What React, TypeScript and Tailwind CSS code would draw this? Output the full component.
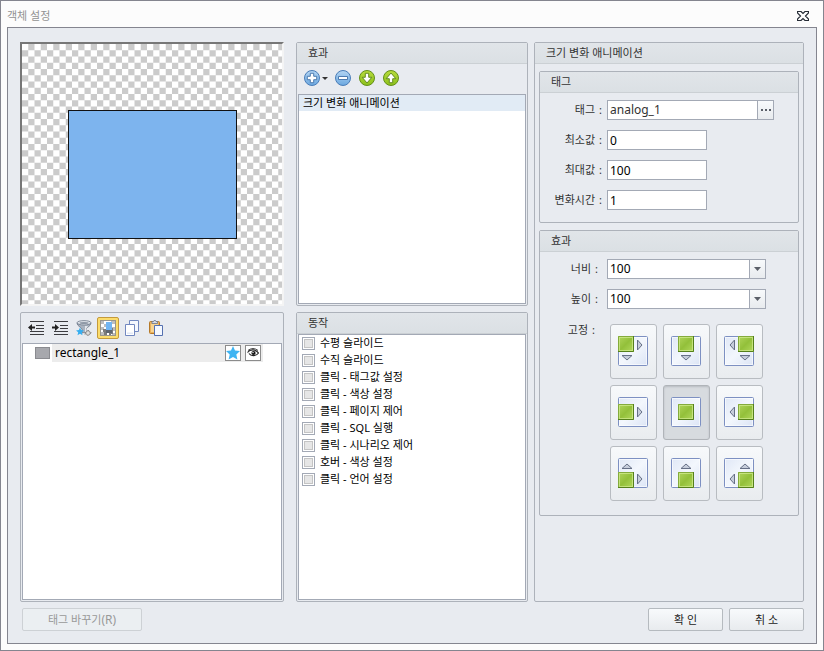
import { useState } from "react";
import type { ReactNode } from "react";

const ACTIONS = [
  "수평 슬라이드",
  "수직 슬라이드",
  "클릭 - 태그값 설정",
  "클릭 - 색상 설정",
  "클릭 - 페이지 제어",
  "클릭 - SQL 실행",
  "클릭 - 시나리오 제어",
  "호버 - 색상 설정",
  "클릭 - 언어 설정",
];

const ANCHORS = [
  { id: "tl", label: "왼쪽 위" },
  { id: "tc", label: "위" },
  { id: "tr", label: "오른쪽 위" },
  { id: "ml", label: "왼쪽" },
  { id: "mc", label: "가운데" },
  { id: "mr", label: "오른쪽" },
  { id: "bl", label: "왼쪽 아래" },
  { id: "bc", label: "아래" },
  { id: "br", label: "오른쪽 아래" },
];

function AnchorIcon({ id }: { id: string }) {
  const row = id[0];
  const col = id[1];
  const x = col === "l" ? 0 : col === "c" ? 7 : 14;
  const y = row === "t" ? 0 : row === "m" ? 7 : 14;
  const cx = col === "l" ? 9 : col === "c" ? 15 : 21;
  const cy = row === "t" ? 9 : row === "m" ? 15 : 21;
  return (
    <svg width="30" height="30" viewBox="0 0 30 30" aria-hidden="true">
      <defs>
        <linearGradient id={`frame-${id}`} x1="0" y1="0" x2="1" y2="1">
          <stop offset="0" stopColor="#dfe7f6" />
          <stop offset=".5" stopColor="#f3f7fd" />
          <stop offset="1" stopColor="#dbe4f5" />
        </linearGradient>
        <linearGradient id={`green-${id}`} x1="0" y1="0" x2="1" y2="1">
          <stop offset="0" stopColor="#b2d65e" />
          <stop offset=".5" stopColor="#93c03a" />
          <stop offset="1" stopColor="#b4da60" />
        </linearGradient>
      </defs>
      <rect x=".5" y=".5" width="29" height="29" rx="1" fill={`url(#frame-${id})`} stroke="#7d90c2" />
      <rect x="1.5" y="1.5" width="27" height="27" fill="none" stroke="#fff" strokeOpacity=".6" />
      <rect x={x} y={y} width="16" height="16" fill={`url(#green-${id})`} />
      <path d={`M${x + 0.5} ${y + 16}V${y + 0.5}H${x + 16}`} fill="none" stroke="#84ab3c" />
      <path d={`M${x + 15.5} ${y}V${y + 15.5}H${x}`} fill="none" stroke="#55801c" />
      <rect x={x + 1.5} y={y + 1.5} width="13" height="13" fill="none" stroke="#d3ec93" strokeOpacity=".7" />
      <g fill="#c6cddb" stroke="#667087">
        {col === "l" && <path d={`M19.5 ${cy - 5}v10l4.5-5z`} />}
        {col === "r" && <path d={`M10.5 ${cy - 5}v10l-4.5-5z`} />}
        {row === "t" && <path d={`M${cx - 5} 19.5h10l-5 4.5z`} />}
        {row === "b" && <path d={`M${cx - 5} 10.5h10l-5-4.5z`} />}
      </g>
    </svg>
  );
}

function RoundIcon({ kind }: { kind: "plus" | "minus" | "down" | "up" }) {
  const green = kind === "down" || kind === "up";
  const shapes = {
    plus: "M6.3 3.3h3.400v3h3v3.400h-3v3H6.300v-3h-3V6.300h3z",
    minus: "M3.500 6.500h9v3h-9z",
    down: "M6.300 3.300h3.400v4h3.100L8 13 3.200 7.300h3.100z",
    up: "M6.300 12.700h3.400v-4h3.100L8 3 3.200 8.700h3.100z",
  };
  return (
    <svg width="16" height="16" viewBox="0 0 16 16" aria-hidden="true">
      <defs>
        <linearGradient id={`round-${kind}`} x1="0" y1="0" x2="0" y2="1">
          <stop offset="0" stopColor={green ? "#b7dc3c" : "#b4d5f3"} />
          <stop offset="1" stopColor={green ? "#8cc01c" : "#6ba8e0"} />
        </linearGradient>
      </defs>
      <circle cx="8" cy="8" r="7.500" fill={`url(#round-${kind})`} stroke={green ? "#64901a" : "#4a7db8"} />
      <path d={shapes[kind]} fill="#fff" stroke={green ? "#5a8217" : "#3f6fa8"} strokeWidth=".9" />
    </svg>
  );
}

function IndentIcon({ out }: { out?: boolean }) {
  return (
    <svg width="16" height="16" viewBox="0 0 16 16" aria-hidden="true">
      <path d="M2 1.500h14M8 5.500h8M8 8.500h8M2 11.500h14M2 14.500h14" stroke="#3c3c40" strokeWidth="1.200" fill="none" />
      {out ? (
        <path d="M0 7.500 4 4v2.500h3v2H4V11z" fill="#222" />
      ) : (
        <path d="M7 7.500 3 4v2.500H0v2h3V11z" fill="#222" />
      )}
    </svg>
  );
}

function FilterIcon() {
  return (
    <svg width="16" height="16" viewBox="0 0 16 16" aria-hidden="true">
      <path d="M1 3c0 3 4 4 5 6v4l4-1V9c1-2 5-3 5-6z" fill="#a9b2bf" stroke="#6f7a8a" strokeWidth=".8" />
      <path d="M9 6h3l-2 3v3H9z" fill="#e3e7ec" />
      <ellipse cx="8" cy="2.800" rx="7" ry="2.200" fill="#dfe4ea" stroke="#6f7a8a" strokeWidth=".8" />
      <ellipse cx="8" cy="3" rx="4.500" ry="1.100" fill="#8e98a6" />
      <path d="m4 7.500 1.100 2.600 2.900.3-2.200 1.900.7 2.900L4 13.700l-2.500 1.500.7-2.900L0 10.400l2.900-.3z" fill="#35aef0" />
      <path d="M9 14.500c0-2 2-4 4-4M10 12h4M11 15c2 0 4-1 4-3" stroke="#777" fill="none" />
      <circle cx="12" cy="13" r="2.200" fill="#ddd" stroke="#888" strokeWidth=".8" />
    </svg>
  );
}

function PreviewIcon() {
  return (
    <svg width="16" height="16" viewBox="0 0 16 16" aria-hidden="true">
      <rect x=".5" y=".5" width="15" height="15" fill="#fff" stroke="#99968c" />
      <path d="M1 1h3v3H1zM11 1h4v3h-4zM4 4h3v3H4zM1 7h3v3H1zM12 7h3v4h-3zM1 12h3v3H1zM12 13h3v2h-3z" fill="#bdbdbd" />
      <path d="M3 9h3v2h4V8h3v6h-2v1H9v-2H7v2H4v-3H3z" fill="#7c7c7c" />
      <rect x="6" y="2" width="6" height="8" fill="#71b5f2" />
      <path d="M6 10h6v3H6z" fill="#5e6670" />
    </svg>
  );
}

function CopyIcon() {
  return (
    <svg width="16" height="16" viewBox="0 0 16 16" aria-hidden="true">
      <path d="M5.500.5h9v11h-9z" fill="#f5f8fe" stroke="#7288c0" />
      <path d="M1.500 4.500h9v11h-9z" fill="#fff" stroke="#7288c0" />
      <path d="M3 12.500h6v1.500H3z" fill="#e2e9f7" />
    </svg>
  );
}

function PasteIcon() {
  return (
    <svg width="16" height="16" viewBox="0 0 16 16" aria-hidden="true">
      <rect x="1.500" y="1.500" width="10" height="12" rx="1" fill="#e9b15c" stroke="#b57928" />
      <path d="M3 4h7v8H3z" fill="#f7d491" />
      <path d="M4 3.500h5.500v-2H8l-.5-1H6l-.5 1H4z" fill="#d5dae4" stroke="#6b7690" strokeWidth=".8" />
      <path d="M6.500 5.500h8v10h-8z" fill="#f4f8ff" stroke="#5570b0" />
    </svg>
  );
}

function GroupHeader({ children }: { children: ReactNode }) {
  return (
    <h2 className="h-[21px] shrink-0 border-b border-[#cbd0d4] bg-linear-to-b from-[#e1e5e9] to-[#dbe0e4] pl-[11px] text-[11px] leading-5 text-[#333]">
      {children}
    </h2>
  );
}

function Panel({ title, className = "", children }: { title?: string; className?: string; children: ReactNode }) {
  return (
    <section className={`flex flex-col rounded-[2px] border border-[#adb2ba] ${className}`}>
      {title && <GroupHeader>{title}</GroupHeader>}
      {children}
    </section>
  );
}

function FieldLabel({ id, children }: { id: string; children: ReactNode }) {
  return (
    <label htmlFor={id} className="flex flex-1 justify-end gap-1">
      {children}
      <span>:</span>
    </label>
  );
}

function TextField({ id, label, value }: { id: string; label: string; value: string }) {
  return (
    <div className="flex h-5 items-center gap-[5px]">
      <div className="flex w-[62px]">
        <FieldLabel id={id}>{label}</FieldLabel>
      </div>
      <input
        id={id}
        defaultValue={value}
        className="h-5 w-[100px] border border-[#a3a9b5] bg-white px-[2px] text-[12px] text-black outline-none"
      />
    </div>
  );
}

function SelectField({ id, label }: { id: string; label: string }) {
  return (
    <div className="flex h-5 items-center gap-[9px]">
      <div className="flex w-[58px]">
        <FieldLabel id={id}>{label}</FieldLabel>
      </div>
      <div className="relative h-5 w-[159px]">
        <select
          id={id}
          defaultValue="100"
          className="h-full w-full appearance-none border border-[#a3a9b5] bg-white px-[2px] text-[12px] text-black outline-none"
        >
          <option>50</option>
          <option>100</option>
          <option>200</option>
        </select>
        <span className="pointer-events-none absolute inset-y-px right-px flex w-4 items-center justify-center border-l border-[#a3a9b5] bg-linear-to-b from-[#f8fafc] to-[#e8ebee]">
          <svg width="7" height="4" viewBox="0 0 7 4" aria-hidden="true">
            <path d="M0 0h7L3.500 4z" fill="#5a5f68" />
          </svg>
        </span>
      </div>
    </div>
  );
}

const dialogButton =
  "h-[23px] rounded-[2px] border border-[#b5babf] bg-linear-to-b from-[#f8fafc] to-[#e8ebee] text-[11px] leading-5 text-[#222]";

export default function App() {
  const [anchor, setAnchor] = useState("mc");
  const [checked, setChecked] = useState<string[]>([]);

  const toggle = (name: string) => {
    setChecked((prev) => (prev.includes(name) ? prev.filter((n) => n !== name) : [...prev, name]));
  };

  return (
    <div className="flex min-h-screen flex-col border border-[#84858f] bg-[#fcfcfc] px-[6px] pb-[6px] font-['Noto_Sans','Noto_Sans_CJK_KR',sans-serif] text-[11px] text-[#333]">
      <header className="flex h-[26px] items-center justify-between pr-2 pt-1">
        <h1 className="text-[#929292]">객체 설정</h1>
        <button type="button" aria-label="닫기">
          <svg width="12" height="10" viewBox="0 0 12 10" aria-hidden="true">
            <path d="M.5.5h3.500l2 2 2-2h3.500v1.500L8.500 5l3 3v1.500H8l-2-2-2 2H.5V8l3-3-3-3z" fill="#fff" stroke="#262c36" strokeWidth="1.200" />
          </svg>
        </button>
      </header>

      <main className="flex flex-1 flex-col border border-[#84858f] bg-[#e8ebf0] px-3 pb-3 pt-[14px]">
        <div className="flex flex-1">
          <div className="mr-3 flex w-[264px] shrink-0 flex-col gap-[6px]">
            <div className="grid h-[264px] border-2 border-b-[#f4f4f4] border-l-[#777] border-r-[#f4f4f4] border-t-[#777]">
              <svg className="col-start-1 row-start-1 h-full w-full" aria-hidden="true">
                <defs>
                  <pattern id="checker" width="25" height="25" patternUnits="userSpaceOnUse" viewBox="0 0 4 4">
                    <rect width="4" height="4" fill="#fff" />
                    <path d="M1 0h1v1H1zM3 0h1v1H3zM0 1h1v1H0zM2 1h1v1H2zM1 2h1v1H1zM3 2h1v1H3zM0 3h1v1H0zM2 3h1v1H2z" fill="#cbcbcb" />
                  </pattern>
                </defs>
                <rect width="100%" height="100%" fill="url(#checker)" />
              </svg>
              <div className="col-start-1 row-start-1 h-[129px] w-[169px] place-self-center border border-[#111] bg-[#7db4ee]" />
            </div>

            <Panel className="flex-1 px-px pb-px">
              <div className="flex h-[30px] items-center pl-[6px]">
                <button type="button" aria-label="내어쓰기" className="mr-2">
                  <IndentIcon out />
                </button>
                <button type="button" aria-label="들여쓰기" className="mr-2">
                  <IndentIcon />
                </button>
                <button type="button" aria-label="필터" className="mr-[5px]">
                  <FilterIcon />
                </button>
                <button
                  type="button"
                  aria-label="미리보기"
                  aria-pressed="true"
                  className="mr-[5px] flex h-[22px] w-[22px] items-center justify-center rounded-[2px] border border-[#c49a3c] bg-[#fbdc6c]"
                >
                  <PreviewIcon />
                </button>
                <button type="button" aria-label="복사" className="mr-2">
                  <CopyIcon />
                </button>
                <button type="button" aria-label="붙여넣기">
                  <PasteIcon />
                </button>
              </div>
              <ul className="flex-1 border border-[#a3a9b5] bg-white">
                <li className="flex h-[18px] items-center pl-3 pr-[18px]">
                  <span className="mr-[2px] h-3 w-[15px] border border-[#8a8b90] bg-[#a7a8ad]" />
                  <div className="flex h-full flex-1 items-center bg-[#ececec] pl-[3px] pr-[2px] text-[12px] text-black">
                    <span className="flex-1">rectangle_1</span>
                    <button type="button" aria-label="효과" className="mr-1 flex h-4 w-4 items-center justify-center border border-[#8c8c8c] bg-white">
                      <svg width="14" height="14" viewBox="0 0 14 14" aria-hidden="true">
                        <path d="m7 0 2 4.600 5 .5-3.700 3.400 1.100 5L7 11l-4.400 2.500 1.100-5L0 5.100l5-.5z" fill="#3fb4f2" />
                      </svg>
                    </button>
                    <button type="button" aria-label="표시" className="flex h-4 w-4 items-center justify-center border border-[#8c8c8c] bg-white">
                      <svg width="12" height="10" viewBox="0 0 12 10" aria-hidden="true">
                        <path d="M.5 4.500C3 1 9 1 11.500 5 9 8.500 4 8.500 2 5.500" fill="none" stroke="#222" strokeWidth="1.200" />
                        <path d="M1 2.500C4 0 8 0 11 2.500" fill="none" stroke="#333" />
                        <circle cx="6.500" cy="5" r="2.100" fill="#111" />
                        <circle cx="6" cy="4.500" r=".7" fill="#fff" />
                      </svg>
                    </button>
                  </div>
                </li>
              </ul>
            </Panel>
          </div>

          <div className="mr-[6px] flex w-[232px] shrink-0 flex-col gap-[6px]">
            <Panel title="효과" className="h-[264px]">
              <div className="flex h-[30px] items-center pb-[2px] pl-[7px]">
                <button type="button" aria-label="추가" className="mr-[7px] flex items-center gap-[2px]">
                  <RoundIcon kind="plus" />
                  <svg width="6" height="3" viewBox="0 0 6 3" aria-hidden="true">
                    <path d="M0 0h6L3 3z" fill="#333" />
                  </svg>
                </button>
                <button type="button" aria-label="삭제" className="mr-2">
                  <RoundIcon kind="minus" />
                </button>
                <button type="button" aria-label="아래로" className="mr-2">
                  <RoundIcon kind="down" />
                </button>
                <button type="button" aria-label="위로">
                  <RoundIcon kind="up" />
                </button>
              </div>
              <ul className="mx-px mb-px flex-1 border border-[#a3a9b5] bg-white text-black">
                <li className="h-4 bg-[#e1ebf5] pl-1 leading-4">크기 변화 애니메이션</li>
              </ul>
            </Panel>

            <Panel title="동작" className="flex-1">
              <ul className="mx-px mb-px flex-1 border border-[#a3a9b5] bg-white text-black">
                {ACTIONS.map((name) => (
                  <li key={name}>
                    <label className="flex h-[17px] items-center gap-[5px] pl-[3px]">
                      <input
                        type="checkbox"
                        checked={checked.includes(name)}
                        onChange={() => toggle(name)}
                        className="h-[13px] w-[13px] appearance-none border border-[#a3a9b5] bg-[#e6e6e6] shadow-[inset_0_0_0_1px_#fff,inset_0_0_0_2px_#c4c4c4] checked:bg-[#4a7ab8]"
                      />
                      {name}
                    </label>
                  </li>
                ))}
              </ul>
            </Panel>
          </div>

          <Panel title="크기 변화 애니메이션" className="flex-1">
            <div className="flex flex-col gap-[7px] px-1 pt-[7px]">
              <Panel title="태그">
                <div className="flex flex-col gap-[10px] pb-3 pt-[7px]">
                  <div className="flex h-5 items-center gap-[5px]">
                    <div className="flex w-[62px]">
                      <FieldLabel id="tag">태그</FieldLabel>
                    </div>
                    <div className="flex h-5 w-[167px] border border-[#a3a9b5] bg-white">
                      <input id="tag" defaultValue="analog_1" className="w-0 flex-1 px-[2px] text-[12px] text-[#333] outline-none" />
                      <button
                        type="button"
                        aria-label="태그 선택"
                        className="flex w-4 items-center justify-center border-l border-[#a3a9b5] bg-linear-to-b from-[#f8fafc] to-[#e8ebee]"
                      >
                        <svg width="10" height="2" viewBox="0 0 10 2" aria-hidden="true">
                          <path d="M0 0h2v2H0zM4 0h2v2H4zM8 0h2v2H8z" fill="#5a5f68" />
                        </svg>
                      </button>
                    </div>
                  </div>
                  <TextField id="min" label="최소값" value="0" />
                  <TextField id="max" label="최대값" value="100" />
                  <TextField id="duration" label="변화시간" value="1" />
                </div>
              </Panel>

              <Panel title="효과">
                <div className="flex flex-col gap-[10px] pt-[7px]">
                  <SelectField id="width" label="너비" />
                  <SelectField id="height" label="높이" />
                </div>
                <div className="flex gap-[15px] pb-[14px] pt-[15px]">
                  <span id="anchor-label" className="flex h-3 w-[55px] justify-end gap-1 leading-3">
                    고정<span>:</span>
                  </span>
                  <div role="group" aria-labelledby="anchor-label" className="grid grid-cols-[repeat(3,47px)] gap-[6px]">
                    {ANCHORS.map((a) => (
                      <button
                        key={a.id}
                        type="button"
                        aria-label={a.label}
                        aria-pressed={anchor === a.id}
                        onClick={() => setAnchor(a.id)}
                        className={`flex h-[55px] items-center justify-center rounded-[3px] border pb-px pr-px ${
                          anchor === a.id
                            ? "border-[#b0b4b9] bg-[#d7dbdf] shadow-[inset_0_1px_2px_#b8bcc1]"
                            : "border-[#b8bcc1] bg-linear-to-b from-[#f7f9fb] to-[#e9ecef]"
                        }`}
                      >
                        <AnchorIcon id={a.id} />
                      </button>
                    ))}
                  </div>
                </div>
              </Panel>
            </div>
          </Panel>
        </div>

        <footer className="mt-[6px] flex gap-[6px] pl-[2px]">
          <button
            type="button"
            disabled
            className="mr-auto h-[23px] w-[120px] rounded-[2px] border border-[#cdd1d5] bg-[#ebeff2] text-[11px] leading-5 text-[#999]"
          >
            태그 바꾸기<span className="text-[12px]">(R)</span>
          </button>
          <button type="button" className={`w-[75px] ${dialogButton}`}>
            확 인
          </button>
          <button type="button" className={`w-[75px] ${dialogButton}`}>
            취 소
          </button>
        </footer>
      </main>
    </div>
  );
}
